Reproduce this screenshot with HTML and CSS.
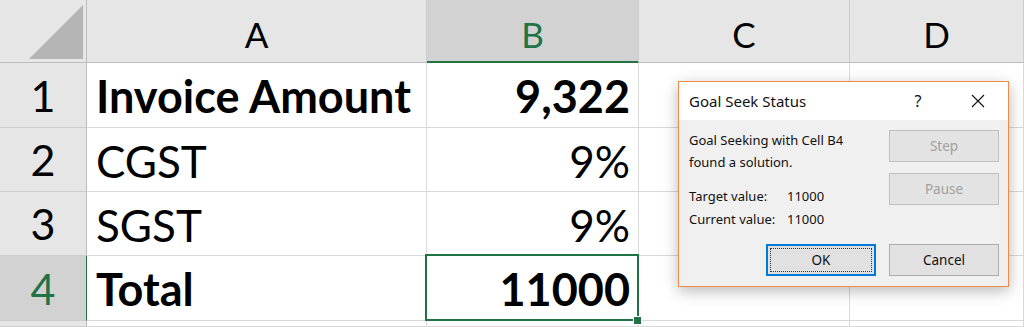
FILE: index.html
```html
<!DOCTYPE html>
<html lang="en">
<head>
    <meta charset="UTF-8">
    <title>Goal Seek Status</title>
    <link rel="stylesheet" href="styles.css">
</head>
<body>

    <!-- Worksheet -->
    <div class="sheet">
        <div class="corner">
            <svg width="86" height="62" viewBox="0 0 86 62"><polygon points="83,5 83,59 29,59" fill="#b4b4b4"/></svg>
        </div>
        <div class="col-head">A</div>
        <div class="col-head selected">B</div>
        <div class="col-head">C</div>
        <div class="col-head">D</div>

        <div class="row-head">1</div>
        <div class="cell bold">Invoice Amount</div>
        <div class="cell num bold">9,322</div>
        <div class="cell"></div>
        <div class="cell"></div>

        <div class="row-head">2</div>
        <div class="cell">CGST</div>
        <div class="cell num">9%</div>
        <div class="cell"></div>
        <div class="cell"></div>

        <div class="row-head">3</div>
        <div class="cell">SGST</div>
        <div class="cell num">9%</div>
        <div class="cell"></div>
        <div class="cell"></div>

        <div class="row-head selected">4</div>
        <div class="cell bold">Total</div>
        <div class="cell num bold active">11000</div>
        <div class="cell"></div>
        <div class="cell"></div>

        <div class="row-head"></div>
        <div class="cell"></div>
        <div class="cell"></div>
        <div class="cell"></div>
        <div class="cell"></div>
    </div>

    <!-- Goal Seek dialog -->
    <div class="dialog">
        <div class="dialog-title">
            <span class="title-text">Goal Seek Status</span>
            <span class="title-help">?</span>
            <span class="title-close">
                <svg width="14" height="14" viewBox="0 0 14 14"><path d="M1 1 L13 13 M13 1 L1 13" stroke="#111" stroke-width="1.1" fill="none"/></svg>
            </span>
        </div>
        <div class="dialog-body">
            <div class="dialog-main">
                <div class="dialog-text">
                    <div class="message">Goal Seeking with Cell B4<br>found a solution.</div>
                    <div class="values">
                        <span>Target value:</span><span>11000</span>
                        <span>Current value:</span><span>11000</span>
                    </div>
                </div>
                <div class="side-buttons">
                    <button class="btn" disabled>Step</button>
                    <button class="btn" disabled>Pause</button>
                </div>
            </div>
            <div class="dialog-actions">
                <button class="btn default">OK</button>
                <button class="btn">Cancel</button>
            </div>
        </div>
    </div>

</body>
</html>
```

FILE: styles.css
```css
/* Reset */
* {
    margin: 0;
    padding: 0;
    box-sizing: border-box;
}

body {
    width: 1024px;
    height: 327px;
    overflow: hidden;
    background: white;
    font-family: 'Lato', 'Liberation Sans', sans-serif;
    color: black;
    position: relative;
}

/* Worksheet grid */
.sheet {
    display: grid;
    grid-template-columns: 87px 340px 212px 211px 1fr;
    grid-template-rows: 63px 65px 64px 64px 65px 1fr;
    height: 327px;
}

.corner {
    background: #e6e6e6;
    border-right: 1px solid #bcbcbc;
    border-bottom: 1px solid #bcbcbc;
}

.corner svg {
    display: block;
}

.col-head {
    background: #e6e6e6;
    border-right: 1px solid #cdcdcd;
    border-bottom: 1px solid #bcbcbc;
    display: flex;
    align-items: center;
    justify-content: center;
    font-size: 35px;
    padding-top: 6px;
}

.col-head.selected {
    background: #d2d2d2;
    color: #217346;
    border-bottom-color: #217346;
    box-shadow: inset 0 -1px 0 #217346;
}

.row-head {
    background: #e6e6e6;
    border-right: 1px solid #bcbcbc;
    border-bottom: 1px solid #cdcdcd;
    display: flex;
    align-items: center;
    justify-content: center;
    font-size: 43px;
}

.row-head.selected {
    background: #d2d2d2;
    color: #217346;
    border-right-color: #217346;
}

.cell {
    border-right: 1px solid #d9d9d9;
    border-bottom: 1px solid #d9d9d9;
    display: flex;
    align-items: center;
    padding: 2px 8px 0 9px;
    font-size: 44px;
    white-space: nowrap;
}

.cell.num {
    justify-content: flex-end;
}

.cell.bold {
    font-weight: bold;
    font-size: 45px;
}

/* Selected cell B4 */
.cell.active {
    position: relative;
}

.cell.active::after {
    content: "";
    position: absolute;
    top: -2px;
    left: -2px;
    right: -1px;
    bottom: -1px;
    border: 2px solid #217346;
}

.cell.active::before {
    content: "";
    position: absolute;
    right: -4px;
    bottom: -5px;
    width: 7px;
    height: 7px;
    background: #217346;
    border: 1px solid white;
    z-index: 1;
}

/* Dialog */
.dialog {
    position: absolute;
    left: 678px;
    top: 81px;
    width: 331px;
    height: 206px;
    border: 1px solid #ef8a47;
    background: #f0f0f0;
    box-shadow: 0 4px 14px rgba(0, 0, 0, 0.28);
    font-family: 'Noto Sans', 'Open Sans', sans-serif;
    font-size: 13px;
    color: #111;
    display: flex;
    flex-direction: column;
}

.dialog-title {
    height: 38px;
    background: white;
    display: flex;
    align-items: center;
    padding-left: 10px;
}

.title-text {
    font-size: 15px;
    flex: 1;
}

.title-help {
    font-size: 16px;
    width: 20px;
    text-align: center;
    margin-right: 43px;
}

.title-close {
    width: 14px;
    margin-right: 23px;
    display: flex;
}

.dialog-body {
    flex: 1;
    padding: 10px 9px 10px 10px;
    display: flex;
    flex-direction: column;
}

.dialog-main {
    height: 100px;
    display: flex;
    justify-content: space-between;
}

.message {
    line-height: 22px;
    margin-top: -1px;
}

.values {
    display: grid;
    grid-template-columns: 98px auto;
    line-height: 23px;
    margin-top: 12px;
}

.side-buttons {
    display: flex;
    flex-direction: column;
    gap: 11px;
}

.btn {
    width: 110px;
    height: 32px;
    background: #e1e1e1;
    border: 1px solid #adadad;
    font-family: inherit;
    font-size: 13.5px;
    color: #111;
}

.btn:disabled {
    color: #a0a0a0;
    border-color: #bfbfbf;
    background: #e3e3e3;
}

.btn.default {
    border: 2px solid #0078d7;
    outline: 1px dotted #333;
    outline-offset: -5px;
}

.dialog-actions {
    margin-top: 14px;
    display: flex;
    justify-content: flex-end;
    gap: 13px;
}
```
